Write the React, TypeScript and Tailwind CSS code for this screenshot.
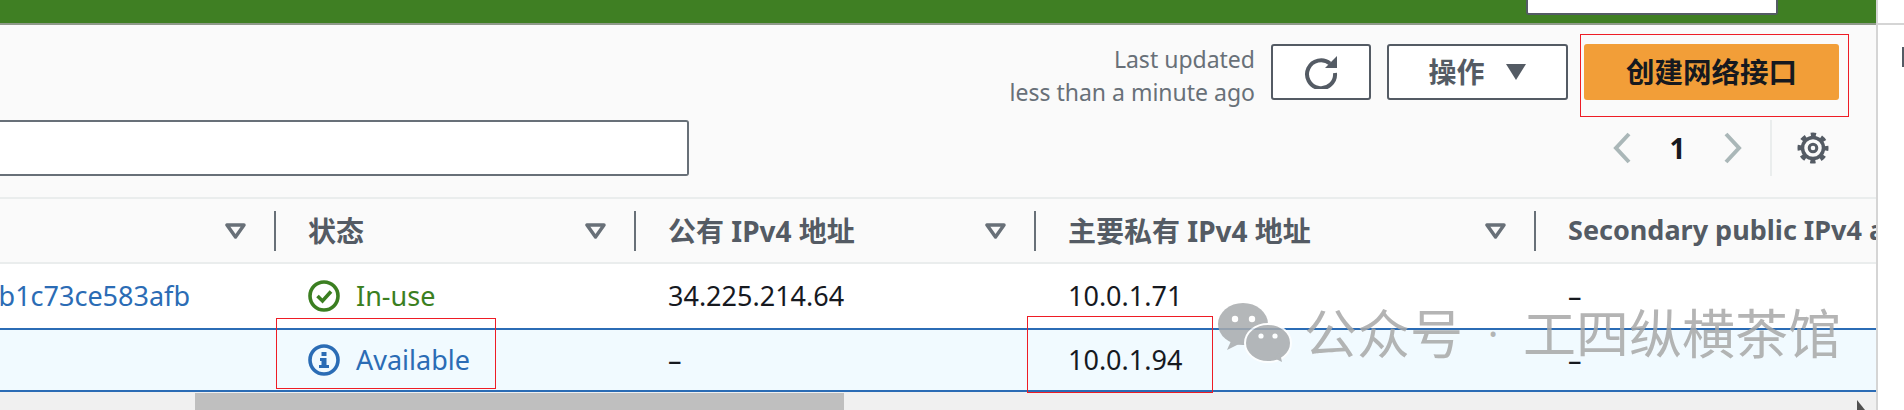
const FONT = "font-['Noto_Sans','Noto_Sans_CJK_SC',sans-serif]";

const FilterIcon = () => (
  <svg width="21" height="16" viewBox="0 0 21 16" className="shrink-0">
    <path d="M2 2h17l-8.5 12z" fill="none" stroke="#687078" strokeWidth="3.5" strokeLinejoin="round" />
  </svg>
);

const HeaderCell = ({ label, width }: { label: string; width: string }) => (
  <div className={`${width} shrink-0 flex items-center h-full pl-[32px] pr-[28px] whitespace-nowrap`}>
    <span className="flex-1 font-bold text-[28px] text-[#545b64]">{label}</span>
    <FilterIcon />
    <div className="w-[2px] h-[40px] bg-[#687078] ml-[28px] -mr-[28px] shrink-0" />
  </div>
);

const App = () => {
  return (
    <div className={`${FONT} relative w-[1904px] h-[410px] overflow-hidden flex bg-white`}>
      <div className="w-[1878px] shrink-0 flex flex-col border-r-2 border-[#d5d5d5] bg-[#fafafa]">
        {/* top nav */}
        <div className="h-[25px] shrink-0 bg-[#3f7f23] border-b-2 border-[#8f9a8a] flex justify-end items-start pr-[22px] overflow-hidden">
          <div className="w-[252px] h-[15px] bg-white border-2 border-t-0 border-[#545b64] rounded-b-[3px] overflow-hidden flex justify-center">
            <span className="text-[26px] leading-none font-bold text-[#545b64] -mt-[27px] whitespace-nowrap">启动实例</span>
          </div>
          <span className="ml-[32px] w-[44px] text-[22px] leading-none text-white -mt-[23px] whitespace-nowrap">支持</span>
        </div>

        {/* toolbar */}
        <div className="flex justify-end items-center gap-[16px] mt-[19px] h-[56px] pr-[37px]">
          <div className="text-right text-[23px] leading-[33px] pt-[8px] text-[#687078] whitespace-nowrap">
            <div>Last updated</div>
            <div>less than a minute ago</div>
          </div>
          <button className="w-[100px] h-[56px] flex items-center justify-center bg-white border-2 border-[#545b64] rounded-[3px]">
            <svg width="34" height="34" viewBox="0 0 34 34" fill="none">
              <path d="M26 8.500A14 14 0 1 0 31 18" stroke="#545b64" strokeWidth="4" />
              <path d="M33 1v12H21z" fill="#545b64" />
            </svg>
          </button>
          <button className="w-[181px] h-[56px] flex items-center justify-center gap-[20px] bg-white border-2 border-[#545b64] rounded-[3px] font-bold text-[28px] text-[#545b64]">
            操作
            <svg width="22" height="18" viewBox="0 0 22 18">
              <path d="M1 1h20L11 17z" fill="#545b64" />
            </svg>
          </button>
          <button className="w-[255px] h-[56px] bg-[#f29e38] rounded-[3px] font-bold text-[28.5px] text-[#16191f]">
            创建网络接口
          </button>
        </div>

        {/* search + pagination */}
        <div className="flex justify-between items-center mt-[20px] h-[56px]">
          <div className="w-[689px] h-full bg-white border-2 border-l-0 border-[#687078] rounded-r-[3px]" />
          <div className="flex items-center h-full pr-[47px]">
            <svg width="18" height="32" viewBox="0 0 18 32" fill="none">
              <path d="M16 2 3 16l13 14" stroke="#aab7b8" strokeWidth="4" />
            </svg>
            <span className="w-[93px] text-center font-bold text-[28px] text-[#16191f]">1</span>
            <svg width="18" height="32" viewBox="0 0 18 32" fill="none">
              <path d="m2 2 13 14L2 30" stroke="#aab7b8" strokeWidth="4" />
            </svg>
            <div className="w-[2px] h-full bg-[#eaeded] ml-[28px] mr-[25px]" />
            <svg width="32" height="32" viewBox="0 0 32 32" fill="none" stroke="#545b64">
              <circle cx="16" cy="16" r="10.500" strokeWidth="3.500" />
              <circle cx="16" cy="16" r="13.500" strokeWidth="4" strokeDasharray="5.300 5.300" strokeDashoffset="2.650" />
              <circle cx="16" cy="16" r="3.800" strokeWidth="3" />
            </svg>
          </div>
        </div>

        {/* table header */}
        <div className="flex items-center h-[67px] mt-[21px] border-y-2 border-[#eaeded] overflow-hidden shrink-0">
          <div className="w-[276px] shrink-0 flex items-center justify-end h-full">
            <FilterIcon />
            <div className="w-[2px] h-[40px] bg-[#687078] ml-[28px]" />
          </div>
          <HeaderCell label="状态" width="w-[360px]" />
          <HeaderCell label="公有 IPv4 地址" width="w-[400px]" />
          <HeaderCell label="主要私有 IPv4 地址" width="w-[500px]" />
          <div className="pl-[32px] font-bold text-[27px] text-[#545b64] whitespace-nowrap">Secondary public IPv4 address</div>
        </div>

        {/* rows */}
        <div className="flex items-center h-[64px] shrink-0 bg-white text-[27px] text-[#16191f] whitespace-nowrap overflow-hidden">
          <div className="w-[276px] shrink-0 flex justify-end pr-[86px] overflow-hidden text-[#2b6cb5]">0b1c73ce583afb</div>
          <div className="w-[360px] shrink-0 pl-[32px] flex items-center gap-[16px] text-[#3b7f21]">
            <svg width="32" height="32" viewBox="0 0 32 32" fill="none">
              <circle cx="16" cy="16" r="14" stroke="#3b7f21" strokeWidth="3.6" />
              <path d="m9.5 16 5 5 8.5-9.5" stroke="#3b7f21" strokeWidth="3.6" />
            </svg>
            In-use
          </div>
          <div className="w-[400px] shrink-0 pl-[32px]">34.225.214.64</div>
          <div className="w-[500px] shrink-0 pl-[32px]">10.0.1.71</div>
          <div className="pl-[32px]">–</div>
        </div>
        <div className="flex items-center h-[64px] shrink-0 bg-[#f1faff] border-y-2 border-[#2b6cb5] text-[27px] text-[#16191f] whitespace-nowrap overflow-hidden">
          <div className="w-[276px] shrink-0" />
          <div className="w-[360px] shrink-0 pl-[32px] flex items-center gap-[16px] text-[#2b6cb5]">
            <svg width="32" height="32" viewBox="0 0 32 32" fill="none">
              <circle cx="16" cy="16" r="14" stroke="#2b6cb5" strokeWidth="3.6" />
              <path d="M13.5 8h5v4h-5zM12 14h6.500v7H21v3H11v-3h2.500v-4H12z" fill="#2b6cb5" />
            </svg>
            Available
          </div>
          <div className="w-[400px] shrink-0 pl-[32px]">–</div>
          <div className="w-[500px] shrink-0 pl-[32px]">10.0.1.94</div>
          <div className="pl-[32px]">–</div>
        </div>

        {/* horizontal scrollbar */}
        <div className="flex-1 bg-[#f0f0f0] flex items-stretch pt-[1px] relative">
          <div className="ml-[195px] w-[649px] bg-[#bfbfbf]" />
          <svg width="8" height="10" viewBox="0 0 8 10" className="absolute right-[11px] bottom-0">
            <path d="M0 0l8 10H0z" fill="#505050" />
          </svg>
        </div>
      </div>

      {/* page area right of the panel */}
      <div className="flex-1 flex flex-col">
        <div className="h-[25px] border-b-2 border-[#d5d5d5]" />
        <div className="w-[2px] h-[20px] mt-[22px] ml-auto bg-[#545b64]" />
      </div>

      {/* red annotation boxes */}
      <div className="absolute left-[1580px] top-[34px] w-[269px] h-[83px] border border-[#ee1c25]" />
      <div className="absolute left-[276px] top-[318px] w-[220px] h-[71px] border border-[#ee1c25]" />
      <div className="absolute left-[1027px] top-[316px] w-[186px] h-[77px] border border-[#ee1c25]" />

      {/* watermark */}
      <div className="absolute left-[1218px] top-[303px] flex items-center opacity-85 pointer-events-none">
        <svg width="74" height="60" viewBox="0 0 74 60" className="mr-[12px]">
          <ellipse cx="25" cy="21" rx="25" ry="21" fill="#a8abad" />
          <path d="M13 38l-4 9 12-6z" fill="#a8abad" />
          <circle cx="17" cy="16" r="3.200" fill="#fff" />
          <circle cx="34" cy="16" r="3.200" fill="#fff" />
          <ellipse cx="50" cy="40" rx="23" ry="19" fill="#a8abad" stroke="#fff" strokeWidth="2" />
          <path d="M56 55l8 4-2-9z" fill="#a8abad" />
          <circle cx="43" cy="33" r="2.600" fill="#fff" />
          <circle cx="57" cy="33" r="2.600" fill="#fff" />
        </svg>
        <span className="text-[53px] leading-none text-[#a8a8a8] whitespace-nowrap">公众号</span>
        <span className="w-[60px] text-center text-[40px] leading-none text-[#a8a8a8]">·</span>
        <span className="text-[53px] leading-none text-[#a8a8a8] whitespace-nowrap">工四纵横茶馆</span>
      </div>
    </div>
  );
};

export default App;
